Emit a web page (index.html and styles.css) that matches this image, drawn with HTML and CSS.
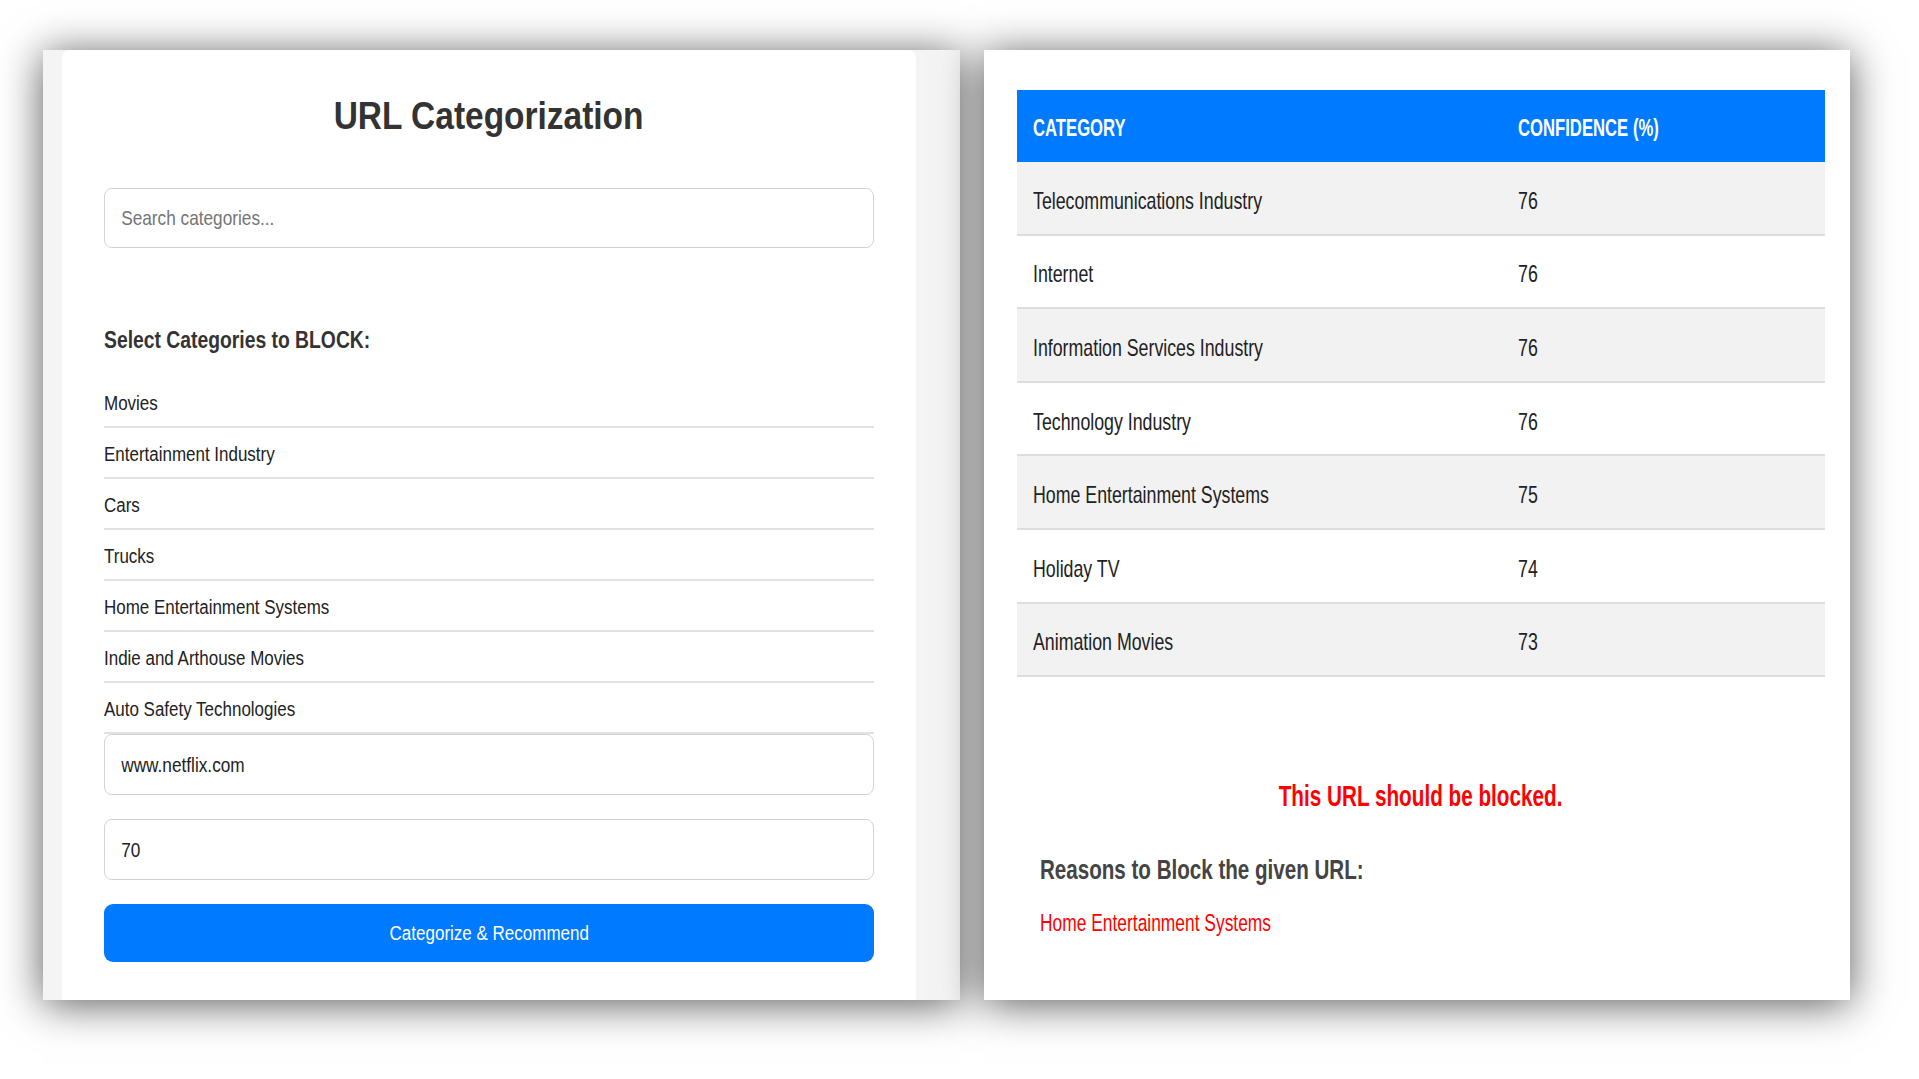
FILE: index.html
```html
<!DOCTYPE html>
<html lang="en">
<head>
<meta charset="utf-8">
<title>URL Categorization</title>
<link rel="stylesheet" href="styles.css">
</head>
<body>
<div class="stage">
  <section class="frame-left">
    <div class="card">
      <h1 class="title"><span class="title-text">URL Categorization</span></h1>
      <input class="field search" type="text" placeholder="Search categories...">
      <h3 class="block-heading"><span class="heading-text">Select Categories to BLOCK:</span></h3>
      <ul class="cat-list">
        <li class="cat-item"><span class="item-text">Movies</span></li>
        <li class="cat-item"><span class="item-text">Entertainment Industry</span></li>
        <li class="cat-item"><span class="item-text">Cars</span></li>
        <li class="cat-item"><span class="item-text">Trucks</span></li>
        <li class="cat-item"><span class="item-text">Home Entertainment Systems</span></li>
        <li class="cat-item"><span class="item-text">Indie and Arthouse Movies</span></li>
        <li class="cat-item"><span class="item-text">Auto Safety Technologies</span></li>
      </ul>
      <input class="field url" type="text" value="www.netflix.com">
      <input class="field threshold" type="text" value="70">
      <button class="submit" type="button"><span class="btn-text">Categorize &amp; Recommend</span></button>
    </div>
  </section>
  <section class="panel-right">
    <table class="results">
      <thead>
        <tr><th class="col-cat"><span class="th-text">Category</span></th><th><span class="th-text">Confidence (%)</span></th></tr>
      </thead>
      <tbody>
        <tr><td><span class="td-text">Telecommunications Industry</span></td><td><span class="td-text">76</span></td></tr>
        <tr><td><span class="td-text">Internet</span></td><td><span class="td-text">76</span></td></tr>
        <tr><td><span class="td-text">Information Services Industry</span></td><td><span class="td-text">76</span></td></tr>
        <tr><td><span class="td-text">Technology Industry</span></td><td><span class="td-text">76</span></td></tr>
        <tr><td><span class="td-text">Home Entertainment Systems</span></td><td><span class="td-text">75</span></td></tr>
        <tr><td><span class="td-text">Holiday TV</span></td><td><span class="td-text">74</span></td></tr>
        <tr><td><span class="td-text">Animation Movies</span></td><td><span class="td-text">73</span></td></tr>
      </tbody>
    </table>
    <p class="verdict"><span class="verdict-text">This URL should be blocked.</span></p>
    <h3 class="reasons-title"><span class="reasons-text">Reasons to Block the given URL:</span></h3>
    <p class="reason"><span class="reason-text">Home Entertainment Systems</span></p>
  </section>
</div>
</body>
</html>
```

FILE: styles.css
```css
* { box-sizing: border-box; }

html, body {
  margin: 0;
  background: #ffffff;
}

body {
  font-family: "Liberation Sans", Arial, sans-serif;
  color: #222;
}

/* condensed look of the original capture */
.title-text,
.heading-text,
.item-text,
.btn-text,
.th-text,
.td-text,
.verdict-text,
.reasons-text,
.reason-text {
  display: inline-block;
  white-space: nowrap;
}

.title-text   { transform: scaleX(0.858); transform-origin: 50% 50%; }
.heading-text { transform: scaleX(0.84);  transform-origin: 0 50%; }
.item-text    { transform: scaleX(0.87);  transform-origin: 0 50%; }
.btn-text     { transform: scaleX(0.85);  transform-origin: 50% 50%; }
.th-text      { transform: scaleX(0.725); transform-origin: 0 50%; }
.td-text      { transform: scaleX(0.74);  transform-origin: 0 50%; }
.verdict-text { transform: scaleX(0.69);  transform-origin: 50% 50%; }
.reasons-text { transform: scaleX(0.735); transform-origin: 0 50%; }
.reason-text  { transform: scaleX(0.71);  transform-origin: 0 50%; }

.stage {
  display: flex;
  align-items: flex-start;
  gap: 24px;
  padding: 50px 0 79px 43px;
}

.frame-left {
  width: 917px;
  height: 950px;
  padding-left: 19px;
  background: #f4f4f4;
  overflow: hidden;
  box-shadow: 0 4px 40px rgba(0, 0, 0, 0.65);
}

.card {
  width: 854px;
  height: 100%;
  padding: 42px 42px 0;
  background: #ffffff;
  border-radius: 8px 8px 0 0;
}

.title {
  margin: 0;
  font-size: 39px;
  line-height: 48px;
  font-weight: 700;
  text-align: center;
  color: #333;
}

/* inputs are drawn wide and condensed like the captured text */
.field {
  display: block;
  width: 939px;
  height: 61px;
  padding: 0 20px;
  border: 1px solid #cccccc;
  border-radius: 9px;
  background: #fff;
  font-family: "Liberation Sans", Arial, sans-serif;
  font-size: 21px;
  color: #222;
  outline: none;
  transform: scaleX(0.82);
  transform-origin: 0 50%;
}

.field::placeholder {
  color: #757575;
}

.search {
  margin-top: 48px;
  height: 60px;
}

.block-heading {
  margin: 78px 0 0;
  font-size: 23px;
  line-height: 28px;
  font-weight: 700;
  color: #333;
}

.cat-list {
  list-style: none;
  margin: 23px 0 0;
  padding: 0;
}

.cat-item {
  padding: 14px 0 10px;
  font-size: 19.5px;
  line-height: 25px;
  color: #222;
  border-bottom: 2px solid #e2e2e2;
}

.threshold {
  margin-top: 24px;
}

.submit {
  display: block;
  width: 100%;
  height: 58px;
  margin-top: 24px;
  border: none;
  border-radius: 9px;
  background: #007bff;
  color: #ffffff;
  font-family: "Liberation Sans", Arial, sans-serif;
  font-size: 20px;
}

.panel-right {
  width: 866px;
  height: 950px;
  padding: 40px 25px 0 33px;
  background: #ffffff;
  box-shadow: 0 4px 40px rgba(0, 0, 0, 0.65);
}

.results {
  width: 100%;
  border-collapse: separate;
  border-spacing: 0;
}

.results th {
  height: 72px;
  padding: 4px 16px 0;
  background: #007bff;
  color: #ffffff;
  text-align: left;
  text-transform: uppercase;
  font-size: 23px;
  font-weight: 700;
}

.results .col-cat {
  width: 60%;
}

.results td {
  height: 73.6px;
  padding: 6px 16px 0;
  font-size: 24px;
  color: #222;
  border-bottom: 2px solid #dddddd;
}

.results tbody tr:nth-child(odd) td {
  background: #f2f2f2;
}

.verdict {
  margin: 101px 0 0;
  text-align: center;
  font-size: 30px;
  line-height: 36px;
  font-weight: 700;
  color: #ff0000;
}

.reasons-title {
  margin: 39px 0 0;
  padding-left: 23px;
  font-size: 28px;
  line-height: 34px;
  font-weight: 700;
  color: #444;
}

.reason {
  margin: 21px 0 0;
  padding-left: 23px;
  font-size: 24.5px;
  line-height: 30px;
  color: #ff0000;
}
```
